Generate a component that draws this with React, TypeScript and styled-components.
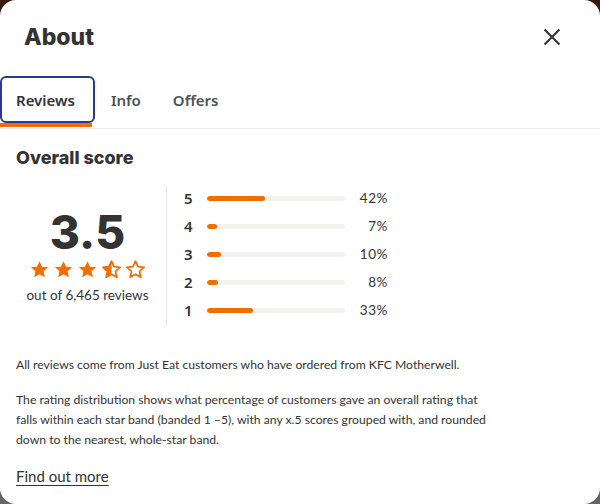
import React from "react"
import styled, { createGlobalStyle } from "styled-components"

const bands = [
  { star: 5, pct: 42 },
  { star: 4, pct: 7 },
  { star: 3, pct: 10 },
  { star: 2, pct: 8 },
  { star: 1, pct: 33 },
]

const STAR = "M12 2.5l2.9 6.3 6.9.7-5.2 4.6 1.5 6.8L12 17.4l-6.1 3.5 1.5-6.8L2.2 9.5l6.9-.7z"

function Star({ fill }: { fill: "full" | "half" | "empty" }) {
  return (
    <svg width="21" height="21" viewBox="0 0 24 24">
      {fill === "half" && (
        <defs>
          <clipPath id="halfclip">
            <rect x="0" y="0" width="12" height="24" />
          </clipPath>
        </defs>
      )}
      {fill === "full" && <path d={STAR} fill="#f36d00" />}
      {fill === "half" && <path d={STAR} fill="#f36d00" clipPath="url(#halfclip)" />}
      {fill !== "full" && (
        <path d={STAR} fill="none" stroke="#f36d00" strokeWidth="2" strokeLinejoin="round" />
      )}
    </svg>
  )
}

function App() {
  return (
    <>
      <GlobalStyle />
      <Card>
        <Header>
          <Title>About</Title>
          <CloseButton aria-label="Close">
            <svg width="18" height="18" viewBox="0 0 18 18">
              <path d="M1.5 1.5L16.5 16.5M16.5 1.5L1.5 16.5" stroke="#333" strokeWidth="2" />
            </svg>
          </CloseButton>
        </Header>
        <Tabs>
          <Tab $active>Reviews</Tab>
          <Tab>Info</Tab>
          <Tab>Offers</Tab>
        </Tabs>
        <Body>
          <SectionTitle>Overall score</SectionTitle>
          <ScoreRow>
            <Summary>
              <Score>3.5</Score>
              <Stars>
                <Star fill="full" />
                <Star fill="full" />
                <Star fill="full" />
                <Star fill="half" />
                <Star fill="empty" />
              </Stars>
              <Count>out of 6,465 reviews</Count>
            </Summary>
            <Distribution>
              {bands.map((b) => (
                <BandRow key={b.star}>
                  <BandLabel>{b.star}</BandLabel>
                  <Track>
                    <Fill style={{ width: `${b.pct}%` }} />
                  </Track>
                  <Pct>{b.pct}%</Pct>
                </BandRow>
              ))}
            </Distribution>
          </ScoreRow>
          <Copy>
            All reviews come from Just Eat customers who have ordered from KFC Motherwell.
          </Copy>
          <Copy>
            The rating distribution shows what percentage of customers gave an overall rating that
            falls within each star band (banded 1 –5), with any x.5 scores grouped with, and rounded
            down to the nearest, whole-star band.
          </Copy>
          <MoreLink href="#">Find out more</MoreLink>
        </Body>
      </Card>
    </>
  )
}

const GlobalStyle = createGlobalStyle`
  * {
    box-sizing: border-box;
  }
  body {
    margin: 0;
    width: 600px;
    height: 504px;
    overflow: hidden;
    background: linear-gradient(180deg, #3a1c0c 0%, #1a1a1a 10%, #555 90%, #666 100%);
    font-family: "Lato", sans-serif;
    color: #333;
  }
`

const Card = styled.div`
  width: 600px;
  height: 504px;
  background: #fff;
  border-radius: 16px;
  overflow: hidden;
  display: flex;
  flex-direction: column;
`

const Header = styled.div`
  display: flex;
  align-items: center;
  justify-content: space-between;
  height: 76px;
  padding: 0 39px 2px 24px;
`

const Title = styled.h1`
  margin: 0;
  font-family: "Inter", sans-serif;
  font-weight: 800;
  font-size: 23px;
  color: #333;
`

const CloseButton = styled.button`
  border: 0;
  background: none;
  padding: 0;
  width: 18px;
  height: 18px;
  display: flex;
  cursor: pointer;
`

const Tabs = styled.div`
  display: flex;
  border-bottom: 1px solid #ececec;
  height: 53px;
`

const Tab = styled.div<{ $active?: boolean }>`
  position: relative;
  display: flex;
  align-items: center;
  height: 47px;
  padding: ${(p) => (p.$active ? "0 18px 0 14px" : "0 14px")};
  font-family: "Noto Sans", sans-serif;
  font-weight: 600;
  font-size: 15px;
  color: ${(p) => (p.$active ? "#2f3336" : "#4a5356")};
  border: 2px solid ${(p) => (p.$active ? "#2a3a94" : "transparent")};
  border-radius: 6px;
  &:after {
    content: "";
    display: ${(p) => (p.$active ? "block" : "none")};
    position: absolute;
    left: -2px;
    right: 1px;
    bottom: -6px;
    height: 4px;
    background: #f36d00;
  }
`

const Body = styled.div`
  padding: 18px 16px 0;
`

const SectionTitle = styled.h2`
  margin: 0;
  font-family: "Inter", sans-serif;
  font-weight: 800;
  font-size: 18px;
  color: #333;
  line-height: 22px;
`

const ScoreRow = styled.div`
  display: flex;
  margin-top: 17px;
  height: 140px;
`

const Summary = styled.div`
  width: 151px;
  border-right: 1px solid #e6e6e6;
  display: flex;
  flex-direction: column;
  align-items: center;
  padding-top: 22px;
  padding-right: 7px;
`

const Score = styled.div`
  font-family: "Inter", sans-serif;
  font-weight: 800;
  font-size: 46px;
  line-height: 48px;
  color: #333;
`

const Stars = styled.div`
  display: flex;
  gap: 3px;
  margin-top: 3px;
`

const Count = styled.div`
  margin-top: 7px;
  font-size: 13.5px;
  color: #333;
  white-space: nowrap;
`

const Distribution = styled.div`
  display: flex;
  flex-direction: column;
  padding-left: 17px;
  margin-top: -2px;
`

const BandRow = styled.div`
  display: flex;
  align-items: center;
  height: 28px;
  flex-shrink: 0;
`

const BandLabel = styled.span`
  width: 23px;
  font-family: "Noto Sans", sans-serif;
  font-size: 15px;
  font-weight: 600;
  color: #333;
`

const Track = styled.div`
  width: 138px;
  height: 5px;
  border-radius: 3px;
  background: #f5f2ee;
  overflow: hidden;
`

const Fill = styled.div`
  height: 100%;
  border-radius: 3px;
  background: #f36d00;
`

const Pct = styled.span`
  width: 43px;
  text-align: right;
  font-size: 13.5px;
  color: #333;
  letter-spacing: 0.6px;
`

const Copy = styled.p`
  margin: 29px 0 0;
  max-width: 486px;
  font-size: 12.2px;
  line-height: 20px;
  color: #333;
  & + & {
    margin-top: 15px;
  }
`

const MoreLink = styled.a`
  display: inline-block;
  margin-top: 17px;
  font-size: 15px;
  color: #333;
  text-decoration: underline;
  text-underline-offset: 3px;
`

export default App
